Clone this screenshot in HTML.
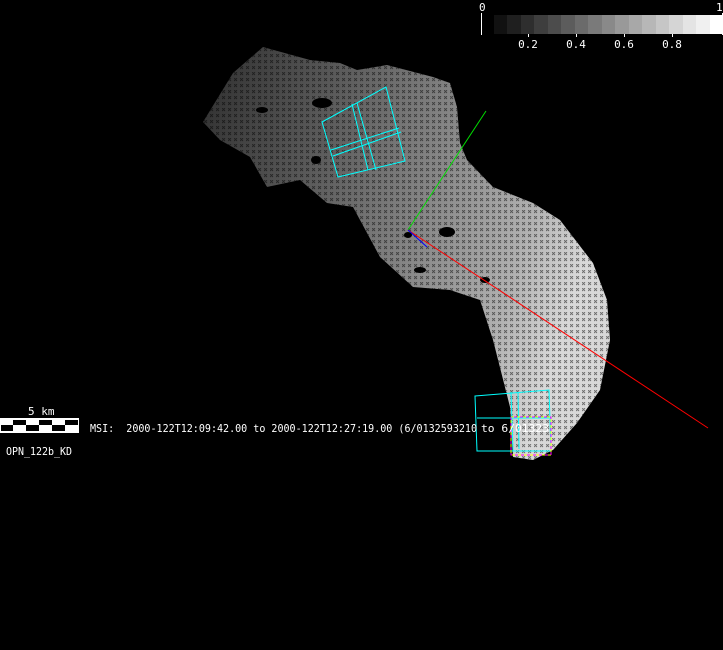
<!DOCTYPE html>
<html><head><style>
html,body{margin:0;padding:0;background:#000;width:723px;height:650px;overflow:hidden}
svg{position:absolute;left:0;top:0}
text{font-family:"DejaVu Sans Mono","Liberation Mono",monospace;font-size:11px;fill:#fff}
</style></head><body>
<svg width="723" height="650" viewBox="0 0 723 650">
<defs>
<linearGradient id="g" x1="0" y1="0" x2="1" y2="0.3">
<stop offset="0" stop-color="#2e2e2e"/>
<stop offset="0.35" stop-color="#5e5e5e"/>
<stop offset="0.6" stop-color="#858585"/>
<stop offset="0.85" stop-color="#b0b0b0"/>
<stop offset="1" stop-color="#d8d8d8"/>
</linearGradient>
<pattern id="p" width="6" height="6" patternUnits="userSpaceOnUse">
<path d="M0 0L3 3M3 0L0 3" stroke="#000" stroke-width="0.9" opacity="0.5"/>
</pattern>
</defs>
<path d="M203 122L233 73L263 47L310 60L340 63L357 70L387 65L433 77L450 83L457 107L460 143L467 160L493 187L533 203L560 220L593 263L607 300L610 340L600 390L577 423L553 450L533 460L513 457L510 407L493 340L480 300L450 290L413 287L380 257L353 207L327 203L300 180L267 187L250 157L220 140Z" fill="url(#g)"/>
<path d="M203 122L233 73L263 47L310 60L340 63L357 70L387 65L433 77L450 83L457 107L460 143L467 160L493 187L533 203L560 220L593 263L607 300L610 340L600 390L577 423L553 450L533 460L513 457L510 407L493 340L480 300L450 290L413 287L380 257L353 207L327 203L300 180L267 187L250 157L220 140Z" fill="url(#p)"/>
<g fill="#000">
<ellipse cx="447" cy="232" rx="8" ry="5"/>
<ellipse cx="408" cy="235" rx="4" ry="3"/>
<ellipse cx="322" cy="103" rx="10" ry="5"/>
<ellipse cx="262" cy="110" rx="6" ry="3"/>
<ellipse cx="316" cy="160" rx="5" ry="4"/>
<ellipse cx="420" cy="270" rx="6" ry="3"/>
<ellipse cx="485" cy="280" rx="5" ry="3"/>
</g>
<line x1="408" y1="230" x2="486" y2="111" stroke="#0d0" stroke-width="1"/>
<line x1="408" y1="230" x2="708" y2="428" stroke="#f00" stroke-width="1"/>
<line x1="408" y1="230" x2="427" y2="247" stroke="#00f" stroke-width="1"/>
<g stroke="#0ff" fill="none" stroke-width="1">
<path d="M322 122L386 87L405 161L338 177Z"/>
<path d="M352 104L368 170M357 103L376 170M331 150L399 128M333 156L401 132"/>
<path d="M475 396L549 390L551 451L477 451Z"/>
<path d="M511 392L513 451M477 418L549 418M518 392L519 449"/>
</g>
<path d="M511 417L551 417L551 455L511 455Z" fill="none" stroke="#ff0" stroke-dasharray="3,3"/>
<path d="M511 417L551 417L551 455L511 455Z" fill="none" stroke="#f0f" stroke-dasharray="3,3" stroke-dashoffset="3"/>
<g>
<rect x="494" y="15" width="14" height="19" fill="#111"/>
<rect x="507" y="15" width="14" height="19" fill="#1f1f1f"/>
<rect x="521" y="15" width="14" height="19" fill="#2e2e2e"/>
<rect x="534" y="15" width="14" height="19" fill="#3e3e3e"/>
<rect x="548" y="15" width="14" height="19" fill="#4c4c4c"/>
<rect x="561" y="15" width="14" height="19" fill="#5c5c5c"/>
<rect x="575" y="15" width="14" height="19" fill="#6b6b6b"/>
<rect x="588" y="15" width="14" height="19" fill="#7a7a7a"/>
<rect x="602" y="15" width="14" height="19" fill="#898989"/>
<rect x="615" y="15" width="14" height="19" fill="#999"/>
<rect x="629" y="15" width="14" height="19" fill="#a8a8a8"/>
<rect x="642" y="15" width="14" height="19" fill="#b7b7b7"/>
<rect x="656" y="15" width="14" height="19" fill="#c6c6c6"/>
<rect x="669" y="15" width="14" height="19" fill="#d5d5d5"/>
<rect x="683" y="15" width="14" height="19" fill="#e4e4e4"/>
<rect x="696" y="15" width="14" height="19" fill="#f0f0f0"/>
<rect x="710" y="15" width="12" height="19" fill="#fff"/>
</g>
<line x1="481.5" y1="13" x2="481.5" y2="35" stroke="#fff"/>
<line x1="722.5" y1="13" x2="722.5" y2="35" stroke="#fff"/>
<g stroke="#fff"><line x1="528.5" y1="34" x2="528.5" y2="37"/><line x1="576.5" y1="34" x2="576.5" y2="37"/><line x1="624.5" y1="34" x2="624.5" y2="37"/><line x1="672.5" y1="34" x2="672.5" y2="37"/></g>
<text x="479" y="11">0</text>
<text x="716" y="11">1</text>
<text x="528" y="48" text-anchor="middle">0.2</text>
<text x="576" y="48" text-anchor="middle">0.4</text>
<text x="624" y="48" text-anchor="middle">0.6</text>
<text x="672" y="48" text-anchor="middle">0.8</text>
<rect x="0" y="418" width="79" height="15" fill="#fff"/>
<g fill="#000">
<rect x="13" y="420" width="13" height="5"/><rect x="39" y="420" width="13" height="5"/><rect x="65" y="420" width="13" height="5"/>
<rect x="1" y="425" width="12" height="6"/><rect x="26" y="425" width="13" height="6"/><rect x="52" y="425" width="13" height="6"/>
</g>
<text x="28" y="415">5 km</text>
<text x="90" y="432" xml:space="preserve" textLength="387" lengthAdjust="spacingAndGlyphs">MSI:  2000-122T12:09:42.00 to 2000-122T12:27:19.00 (6/0132593210</text>
<text x="481" y="432" textLength="68" lengthAdjust="spacingAndGlyphs">to 6/01323</text>
<text x="6" y="455" textLength="66" lengthAdjust="spacingAndGlyphs">OPN_122b_KD</text>
</svg>
</body></html>
